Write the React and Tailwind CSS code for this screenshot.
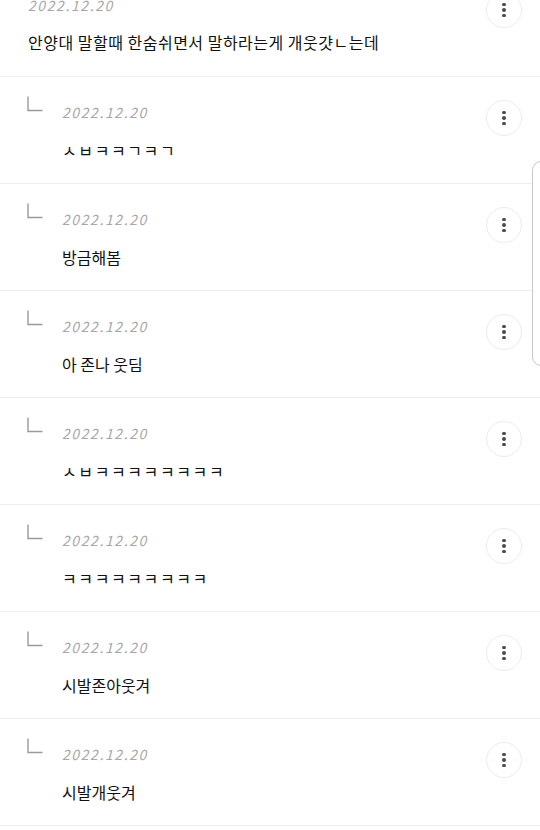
import React from "react";

const FONT = { fontFamily: '"Noto Sans CJK KR", "Noto Sans", sans-serif' };

const replies = [
  { t: "ㅅㅂㅋㅋㄱㅋㄱ", jamo: true },
  { t: "방금해봄" },
  { t: "아 존나 웃딤" },
  { t: "ㅅㅂㅋㅋㅋㅋㅋㅋㅋㅋ", jamo: true },
  { t: "ㅋㅋㅋㅋㅋㅋㅋㅋㅋ", jamo: true },
  { t: "시발존아웃겨" },
  { t: "시발개웃겨" },
];

function Kebab() {
  return (
    <button className="ml-auto shrink-0 w-[36px] h-[36px] rounded-full border border-[#ececec] bg-white flex flex-col items-center justify-center gap-[2px]">
      <span className="w-[3.5px] h-[3.5px] rounded-full bg-[#4a4a4a]" />
      <span className="w-[3.5px] h-[3.5px] rounded-full bg-[#4a4a4a]" />
      <span className="w-[3.5px] h-[3.5px] rounded-full bg-[#4a4a4a]" />
    </button>
  );
}

function ReplyIcon() {
  return (
    <svg width="16" height="16" viewBox="0 0 16 16" className="shrink-0 mt-[19px]">
      <path d="M1 0.5 V14.5 H15.5" fill="none" stroke="#9a9a9a" strokeWidth="1.4" />
    </svg>
  );
}

function DateText() {
  return (
    <div className="text-[14px] leading-[20px] tracking-[1.6px] text-[#a8a8a8] italic">2022.12.20</div>
  );
}

export default function App() {
  return (
    <div className="relative w-[540px] h-[830px] overflow-hidden bg-white" style={FONT}>
      <div className="-mt-[30px]">
        <div className="flex items-start h-[107px] border-b border-[#eeeeee] pl-[28px] pr-[18px]">
          <div className="flex flex-col mt-[25px]">
            <DateText />
            <div className="mt-[15px] text-[16px] leading-[24px] tracking-[0.5px] text-[#111] whitespace-nowrap">
              안양대 말할때 한숨쉬면서 말하라는게 개웃걋ㄴ는데
            </div>
          </div>
          <div className="ml-auto mt-[22px]">
            <Kebab />
          </div>
        </div>
        {replies.map((r, i) => (
          <div key={i} className="flex items-start h-[107px] border-b border-[#eeeeee] pl-[27px] pr-[18px]">
            <ReplyIcon />
            <div className="flex flex-col mt-[25px] ml-[19px]">
              <DateText />
              {r.jamo ? (
                <div className="mt-[16px] text-[16px] leading-[24px] tracking-[1.6px] text-[#111] whitespace-nowrap">{r.t}</div>
              ) : (
                <div className="mt-[16px] text-[16px] leading-[24px] text-[#111] whitespace-nowrap">{r.t}</div>
              )}
            </div>
            <div className="ml-auto mt-[23px]">
              <Kebab />
            </div>
          </div>
        ))}
      </div>
      <div className="absolute left-[532px] top-[161px] w-[30px] h-[205px] rounded-[9px] border border-[#c8c8c8] bg-white" />
    </div>
  );
}
